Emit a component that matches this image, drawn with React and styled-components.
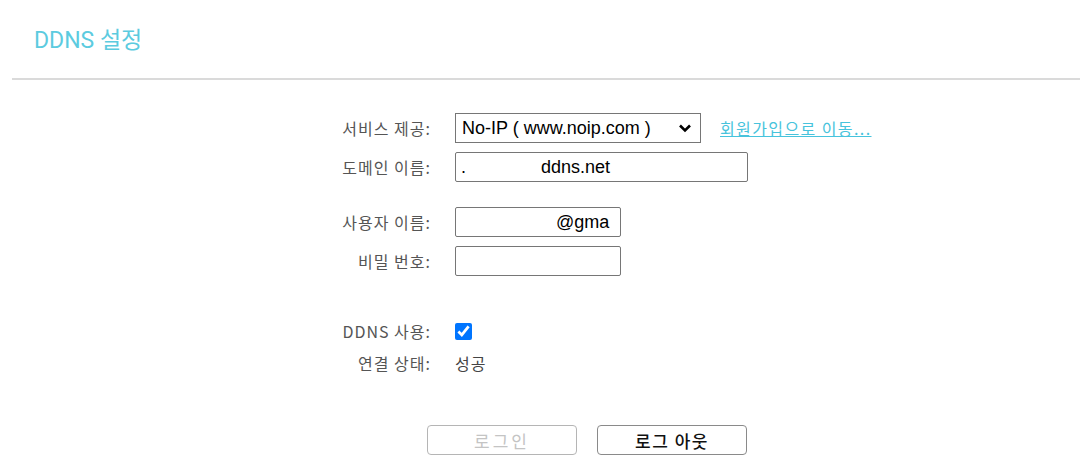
import React from 'react';
import styled, { createGlobalStyle } from 'styled-components';

const GlobalStyle = createGlobalStyle`
  html, body {
    margin: 0;
    padding: 0;
    background: #ffffff;
  }
  body {
    font-family: "Liberation Sans", "Noto Sans CJK KR", sans-serif;
    color: #333;
  }
`;

const Page = styled.div`
  width: 1080px;
  height: 461px;
  overflow: hidden;
`;

const Header = styled.div`
  height: 80px;
  margin-left: 12px;
  border-bottom: 2px solid #dadada;
  display: flex;
  align-items: center;
  padding-left: 22px;
  box-sizing: border-box;
`;

const Title = styled.h1`
  margin: 0;
  font-family: "Roboto", "Noto Sans CJK KR", sans-serif;
  font-weight: 400;
  font-size: 23px;
  color: #5ccbdf;
  padding-bottom: 2px;
`;

const Form = styled.div`
  padding-top: 33px;
  display: flex;
  flex-direction: column;
`;

const Group = styled.div`
  display: flex;
  flex-direction: column;
  gap: ${p => p.gap || 9}px;
  margin-bottom: ${p => p.after || 0}px;
`;

const Row = styled.div`
  display: grid;
  grid-template-columns: 430px auto;
  column-gap: 25px;
  align-items: center;
  height: ${p => p.h || 30}px;
`;

const Label = styled.div`
  text-align: right;
  font-family: "Noto Sans CJK KR", sans-serif;
  font-size: 16px;
  color: #555;
  letter-spacing: 1px;
  margin-right: -1px;
`;

const Field = styled.div`
  display: flex;
  align-items: center;
  gap: 19px;
`;

const Select = styled.select`
  appearance: none;
  width: 246px;
  height: 30px;
  border: 1px solid #767676;
  border-radius: 0;
  background: #fff url("data:image/svg+xml;utf8,<svg xmlns='http://www.w3.org/2000/svg' width='14' height='10' viewBox='0 0 14 10'><path d='M2 2.5 L7 7.5 L12 2.5' fill='none' stroke='black' stroke-width='2.6'/></svg>") no-repeat right 8px center;
  font-family: "Liberation Sans", Arial, sans-serif;
  font-size: 18px;
  color: #000;
  padding: 0 6px;
  box-sizing: border-box;
`;

const Input = styled.input`
  width: ${p => p.w}px;
  height: 30px;
  box-sizing: border-box;
  border: 1px solid #767676;
  border-radius: 2px;
  font-family: "Liberation Sans", Arial, sans-serif;
  font-size: 18px;
  color: #000;
  padding: 0 5px;
  outline: none;
`;

const Link = styled.a`
  font-family: "Noto Sans CJK KR", sans-serif;
  font-size: 16px;
  letter-spacing: 1.4px;
  color: #47c3dc;
  text-decoration: underline;
  cursor: pointer;
`;

const Check = styled.input`
  margin: 1px 0 0;
  width: 17px;
  height: 17px;
  accent-color: #0075ff;
`;

const Value = styled.span`
  font-family: "Noto Sans CJK KR", sans-serif;
  font-size: 16px;
  letter-spacing: 1px;
  color: #444;
`;

const Buttons = styled.div`
  display: flex;
  gap: 20px;
  padding-left: 427px;
  margin-top: 47px;
`;

const Button = styled.button`
  width: 150px;
  height: 30px;
  background: #fff;
  border: 1px solid ${p => (p.disabled ? '#b5b5b5' : '#8a8a8a')};
  border-radius: 4px;
  font-family: "Noto Sans CJK KR", sans-serif;
  font-size: 17px;
  letter-spacing: ${p => (p.disabled ? '3px' : '1.5px')};
  font-weight: ${p => (p.disabled ? 400 : 500)};
  color: ${p => (p.disabled ? '#c4c4c4' : '#111')};
`;

export default function App() {
  return (
    <Page>
      <GlobalStyle />
      <Header>
        <Title>DDNS 설정</Title>
      </Header>
      <Form>
        <Group after={25}>
          <Row>
            <Label>서비스 제공:</Label>
            <Field>
              <Select defaultValue="noip">
                <option value="noip">No-IP ( www.noip.com )</option>
                <option value="dyndns">DynDNS ( www.dyndns.com )</option>
              </Select>
              <Link>회원가입으로 이동...</Link>
            </Field>
          </Row>
          <Row>
            <Label>도메인 이름:</Label>
            <Input w={293} defaultValue={'.               ddns.net'} />
          </Row>
        </Group>
        <Group after={40}>
          <Row>
            <Label>사용자 이름:</Label>
            <Input w={166} defaultValue={'                   @gma'} />
          </Row>
          <Row>
            <Label>비밀 번호:</Label>
            <Input w={166} type="text" defaultValue="" />
          </Row>
        </Group>
        <Group gap={2}>
          <Row>
            <Label>DDNS 사용:</Label>
            <Field>
              <Check type="checkbox" defaultChecked />
            </Field>
          </Row>
          <Row>
            <Label>연결 상태:</Label>
            <Value>성공</Value>
          </Row>
        </Group>
        <Buttons>
          <Button disabled>로그인</Button>
          <Button>로그 아웃</Button>
        </Buttons>
      </Form>
    </Page>
  );
}
